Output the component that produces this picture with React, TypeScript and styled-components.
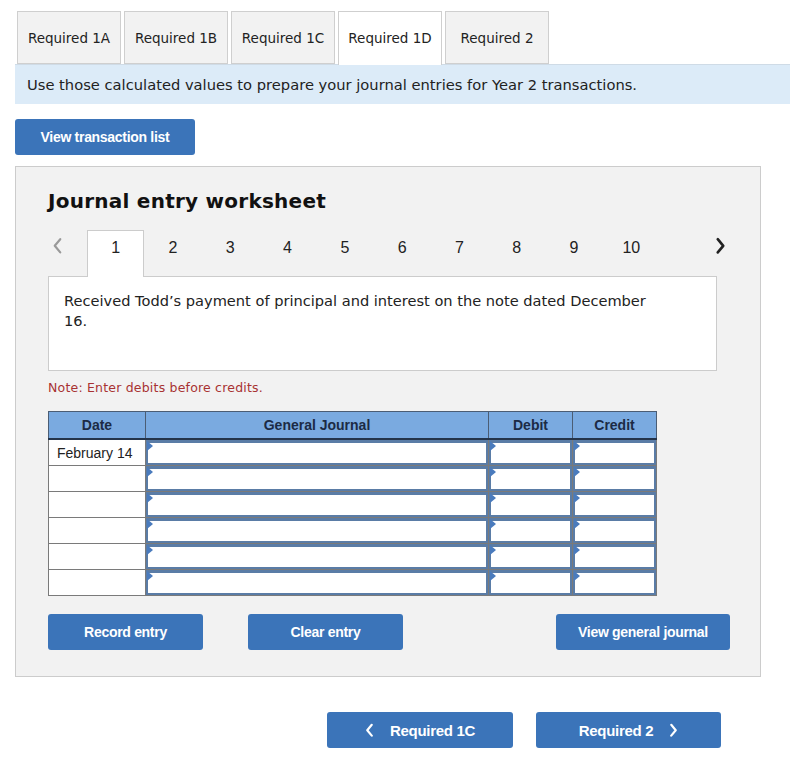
import React from "react";
import styled, { createGlobalStyle } from "styled-components";

const GlobalStyle = createGlobalStyle`
  html, body {
    margin: 0;
    padding: 0;
    background: #ffffff;
  }
  body {
    font-family: "DejaVu Sans", Verdana, sans-serif;
    color: #222;
  }
`;

const Page = styled.div`
  width: 790px;
  padding-top: 11px;
`;

const TabList = styled.div`
  display: flex;
  gap: 3px;
  margin-left: 17px;
  position: relative;
  z-index: 1;
`;

const Tab = styled.div<{ $active?: boolean }>`
  width: 104px;
  box-sizing: border-box;
  display: flex;
  align-items: center;
  justify-content: center;
  padding-bottom: ${(p) => (p.$active ? "1px" : "0")};
  font-size: 13.5px;
  color: #222;
  background: ${(p) => (p.$active ? "#ffffff" : "#f2f2f2")};
  border: 1px solid #cfcfcf;
  border-bottom: ${(p) => (p.$active ? "none" : "1px solid #cfcfcf")};
  margin-bottom: ${(p) => (p.$active ? "-1px" : "0")};
  height: ${(p) => (p.$active ? "54px" : "53px")};
`;

const InfoBar = styled.div`
  margin-left: 15px;
  height: 40px;
  box-sizing: border-box;
  background: #dcebf8;
  border-top: 1px solid #cfdbe6;
  display: flex;
  align-items: center;
  padding-left: 12px;
  font-size: 14.7px;
  color: #222;
`;

const BlueButton = styled.button<{ $width: number; $large?: boolean }>`
  width: ${(p) => p.$width}px;
  height: 36px;
  background: #3b74b9;
  color: #ffffff;
  border: none;
  border-radius: 3px;
  font-family: "Liberation Sans", Arial, sans-serif;
  font-weight: bold;
  font-size: ${(p) => (p.$large ? "15px" : "14px")};
  letter-spacing: -0.3px;
  display: flex;
  align-items: center;
  justify-content: center;
  gap: ${(p) => (p.$large ? "16px" : "0")};
  padding: 0;
  cursor: pointer;
`;

const TopButtonRow = styled.div`
  margin: 15px 0 0 15px;
`;

const Panel = styled.div`
  margin: 11px 0 0 15px;
  width: 746px;
  height: 511px;
  box-sizing: border-box;
  background: #f2f2f2;
  border: 1px solid #cccccc;
  padding: 22px 30px 0 32px;
`;

const Title = styled.h2`
  margin: 0;
  font-size: 20px;
  font-weight: bold;
  color: #111;
  line-height: 25px;
  letter-spacing: 0.25px;
`;

const Pager = styled.div`
  display: flex;
  align-items: stretch;
  height: 46px;
  margin-top: 16px;
  position: relative;
  z-index: 1;
`;

const PagerArrow = styled.div<{ $dark?: boolean }>`
  box-sizing: border-box;
  width: ${(p) => (p.$dark ? "auto" : "39px")};
  flex: ${(p) => (p.$dark ? "1" : "none")};
  display: flex;
  align-items: flex-start;
  padding-top: 7px;
  justify-content: ${(p) => (p.$dark ? "flex-end" : "flex-start")};
  padding-left: ${(p) => (p.$dark ? "0" : "4px")};
  padding-right: ${(p) => (p.$dark ? "4px" : "0")};
  color: ${(p) => (p.$dark ? "#222" : "#999")};
`;

const PageCell = styled.div<{ $active?: boolean }>`
  width: 57.3px;
  flex: none;
  box-sizing: border-box;
  display: flex;
  align-items: flex-start;
  justify-content: center;
  padding-top: 8px;
  font-family: "Liberation Sans", Arial, sans-serif;
  font-size: 16px;
  color: #222;
  background: ${(p) => (p.$active ? "#ffffff" : "transparent")};
  border: ${(p) => (p.$active ? "1px solid #cccccc" : "1px solid transparent")};
  border-bottom: none;
  margin-bottom: ${(p) => (p.$active ? "-1px" : "0")};
`;

const Description = styled.div`
  width: 669px;
  height: 95px;
  box-sizing: border-box;
  background: #ffffff;
  border: 1px solid #cccccc;
  padding: 14px 15px 0 15px;
`;

const DescriptionText = styled.p`
  margin: 0;
  max-width: 600px;
  font-size: 14.6px;
  line-height: 20px;
  color: #222;
`;

const Note = styled.p`
  margin: 9px 0 0 0;
  font-size: 12.5px;
  color: #a83232;
  letter-spacing: 0.2px;
`;

const Table = styled.table`
  width: 608px;
  margin-top: 16px;
  border-collapse: collapse;
  table-layout: fixed;
  font-family: "Liberation Sans", Arial, sans-serif;
  font-size: 14px;
`;

const HeadCell = styled.th`
  height: 26px;
  padding: 0;
  background: #7aaae0;
  color: #1c2b45;
  font-weight: bold;
  border: 1px solid #4b5d74;
  border-bottom: 2px solid #24344a;
`;

const DateCell = styled.td`
  height: 25px;
  padding: 0 0 0 8px;
  background: #ffffff;
  border: 1px solid #7a7a7a;
  color: #222;
  white-space: nowrap;
`;

const InputCell = styled.td`
  height: 25px;
  padding: 0;
  border: 1px solid #7a7a7a;
  border-left: none;
`;

const InputBox = styled.div`
  position: relative;
  height: 25px;
  box-sizing: border-box;
  background: #ffffff;
  border: 2px solid #5a7ca6;
  border-top-width: 3px;
`;

const Marker = styled.span`
  position: absolute;
  left: -1px;
  top: -2px;
  width: 0;
  height: 0;
  border-top: 5px solid transparent;
  border-bottom: 5px solid transparent;
  border-left: 6px solid #4a7bbd;
`;

const ActionRow = styled.div`
  display: flex;
  margin-top: 18px;
  gap: 45px;
`;

const ActionSpacer = styled.div`
  flex: 1;
`;

const NavRow = styled.div`
  display: flex;
  gap: 23px;
  margin: 35px 0 0 327px;
`;

function Chevron({ dir, size, stroke, color }: { dir: "left" | "right"; size: number; stroke: number; color: string }) {
  return (
    <svg width={size} height={size * 1.6} viewBox="0 0 10 16">
      <path
        d={dir === "left" ? "M7.5 2 L2.5 8 L7.5 14" : "M2.5 2 L7.5 8 L2.5 14"}
        fill="none"
        stroke={color}
        strokeWidth={stroke}
        strokeLinecap="round"
        strokeLinejoin="round"
      />
    </svg>
  );
}

const tabs = ["Required 1A", "Required 1B", "Required 1C", "Required 1D", "Required 2"];
const pages = [1, 2, 3, 4, 5, 6, 7, 8, 9, 10];
const rows = ["February 14", "", "", "", "", ""];
const columns = [
  { label: "Date", width: 97 },
  { label: "General Journal", width: 343 },
  { label: "Debit", width: 84 },
  { label: "Credit", width: 84 },
];

function JournalRow({ date }: { date: string }) {
  return (
    <tr>
      <DateCell>{date}</DateCell>
      {[0, 1, 2].map((i) => (
        <InputCell key={i}>
          <InputBox>
            <Marker />
          </InputBox>
        </InputCell>
      ))}
    </tr>
  );
}

export default function App() {
  return (
    <Page>
      <GlobalStyle />
      <TabList>
        {tabs.map((t) => (
          <Tab key={t} $active={t === "Required 1D"}>
            {t}
          </Tab>
        ))}
      </TabList>
      <InfoBar>Use those calculated values to prepare your journal entries for Year 2 transactions.</InfoBar>

      <TopButtonRow>
        <BlueButton $width={180}>View transaction list</BlueButton>
      </TopButtonRow>

      <Panel>
        <Title>Journal entry worksheet</Title>

        <Pager>
          <PagerArrow>
            <Chevron dir="left" size={11} stroke={2} color="#9a9a9a" />
          </PagerArrow>
          {pages.map((n) => (
            <PageCell key={n} $active={n === 1}>
              {n}
            </PageCell>
          ))}
          <PagerArrow $dark>
            <Chevron dir="right" size={11} stroke={2.4} color="#222" />
          </PagerArrow>
        </Pager>

        <Description>
          <DescriptionText>
            Received Todd’s payment of principal and interest on the note dated December 16.
          </DescriptionText>
        </Description>

        <Note>Note: Enter debits before credits.</Note>

        <Table>
          <colgroup>
            {columns.map((c) => (
              <col key={c.label} width={c.width} />
            ))}
          </colgroup>
          <thead>
            <tr>
              {columns.map((c) => (
                <HeadCell key={c.label}>{c.label}</HeadCell>
              ))}
            </tr>
          </thead>
          <tbody>
            {rows.map((d, i) => (
              <JournalRow key={i} date={d} />
            ))}
          </tbody>
        </Table>

        <ActionRow>
          <BlueButton $width={155}>Record entry</BlueButton>
          <BlueButton $width={155}>Clear entry</BlueButton>
          <ActionSpacer />
          <BlueButton $width={174}>View general journal</BlueButton>
        </ActionRow>
      </Panel>

      <NavRow>
        <BlueButton $width={186} $large>
          <Chevron dir="left" size={9} stroke={2.4} color="#ffffff" />
          <span>Required 1C</span>
        </BlueButton>
        <BlueButton $width={185} $large>
          <span>Required 2</span>
          <Chevron dir="right" size={9} stroke={2.4} color="#ffffff" />
        </BlueButton>
      </NavRow>
    </Page>
  );
}
